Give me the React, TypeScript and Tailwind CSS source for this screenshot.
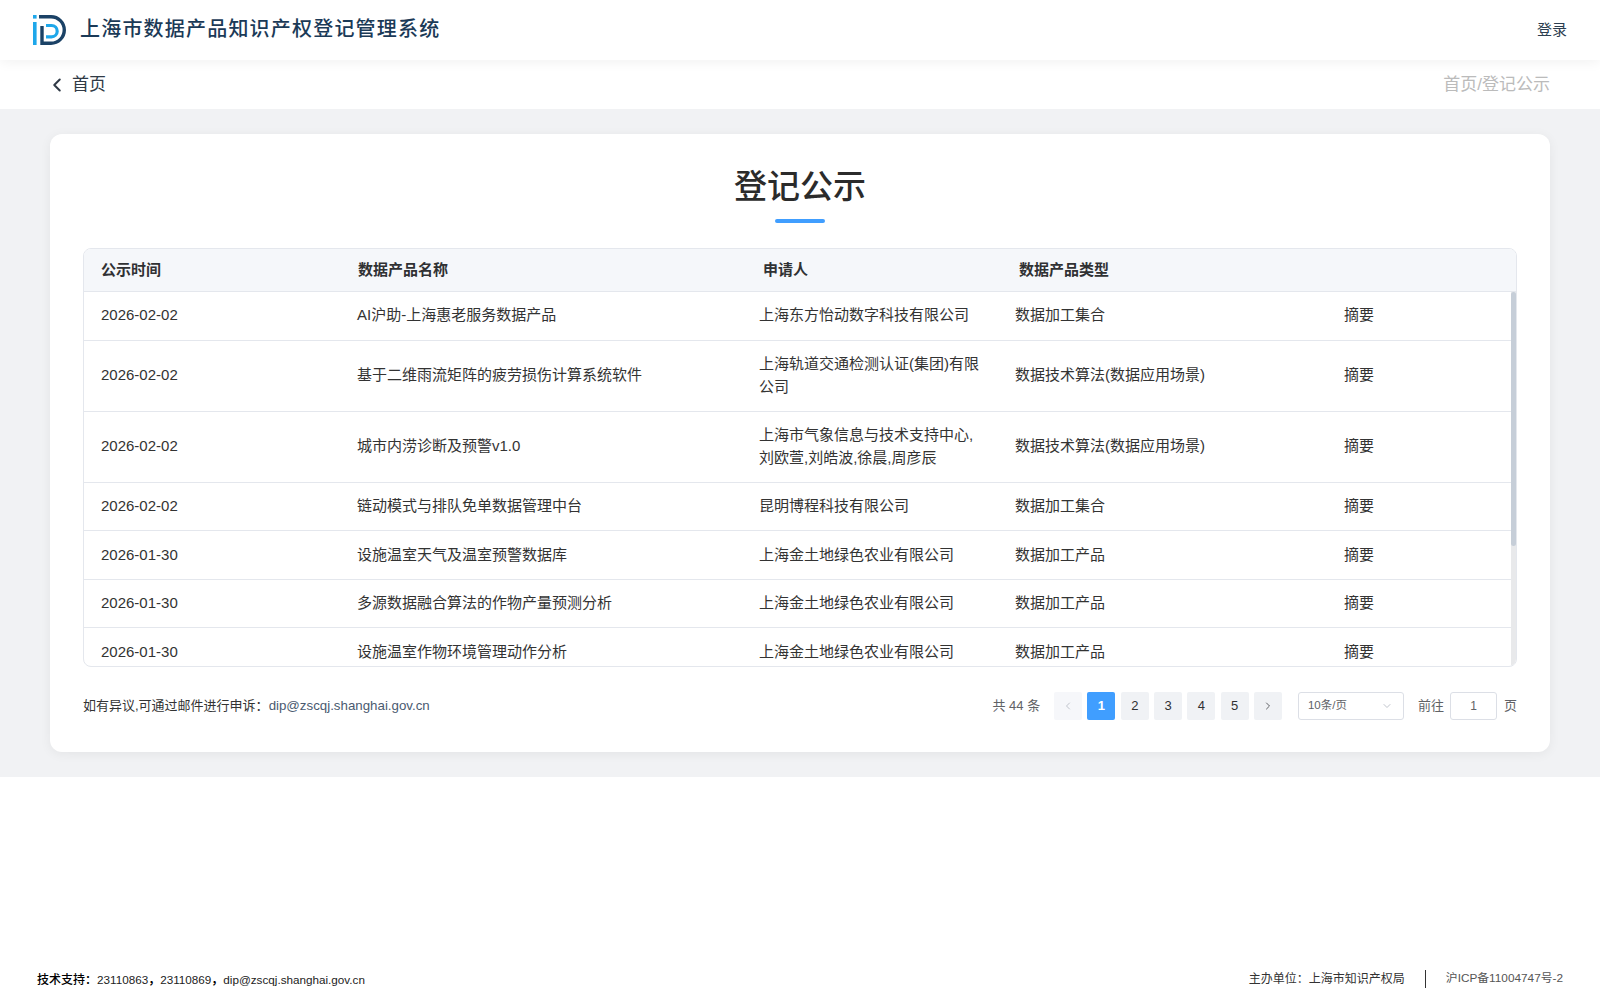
import React from "react";
import { ChevronLeft, ChevronRight, ChevronDown } from "lucide-react";

const bodyCols = "grid grid-cols-[256px_402px_256px_329px_1fr] items-center";
const headCols = "grid grid-cols-[257px_405px_256px_1fr] items-center";

const rows = [
  { date: "2026-02-02", name: "AI沪助-上海惠老服务数据产品", owner: "上海东方怡动数字科技有限公司", type: "数据加工集合", h: "h-[49px] pb-[3px]" },
  { date: "2026-02-02", name: "基于二维雨流矩阵的疲劳损伤计算系统软件", owner: "上海轨道交通检测认证(集团)有限公司", type: "数据技术算法(数据应用场景)", h: "h-[71px] pb-[3px]" },
  { date: "2026-02-02", name: "城市内涝诊断及预警v1.0", owner: "上海市气象信息与技术支持中心,刘欧萱,刘皓波,徐晨,周彦辰", type: "数据技术算法(数据应用场景)", h: "h-[71px] pb-[3px]" },
  { date: "2026-02-02", name: "链动模式与排队免单数据管理中台", owner: "昆明博程科技有限公司", type: "数据加工集合", h: "h-[48px] pb-[2px]" },
  { date: "2026-01-30", name: "设施温室天气及温室预警数据库", owner: "上海金土地绿色农业有限公司", type: "数据加工产品", h: "h-[49px] pb-[2px]" },
  { date: "2026-01-30", name: "多源数据融合算法的作物产量预测分析", owner: "上海金土地绿色农业有限公司", type: "数据加工产品", h: "h-[48px] pb-[2px]" },
  { date: "2026-01-30", name: "设施温室作物环境管理动作分析", owner: "上海金土地绿色农业有限公司", type: "数据加工产品", h: "h-[48px] pb-[1px]" },
];

function Logo() {
  return (
    <svg width="34" height="30" viewBox="0 0 34 30" fill="none" className="shrink-0">
      <rect x="0" y="0" width="3.6" height="3.6" fill="#1ea7ea" />
      <rect x="0" y="7" width="3.6" height="23" fill="#1ea7ea" />
      <path d="M6 1.7H18A13.3 13.3 0 0 1 18 28.3H9V11" stroke="#1b4266" strokeWidth="3.4" />
      <path d="M13 10.5H18.5A5.7 5.7 0 0 1 18.5 21.9H13" stroke="#1ea7ea" strokeWidth="3.2" />
    </svg>
  );
}

function PageButton({ children, active, dim }: { children: React.ReactNode; active?: boolean; dim?: boolean }) {
  return (
    <div
      className={
        "flex h-[28px] w-[28px] items-center justify-center rounded-[2px] text-[13px] " +
        (active ? "bg-[#409eff] font-bold text-white" : dim ? "bg-[#f6f7fa] text-[#c0c4cc]" : "bg-[#f0f2f5] text-[#303133]")
      }
    >
      {children}
    </div>
  );
}

export default function App() {
  return (
    <div className="flex h-screen flex-col overflow-hidden bg-white font-['Liberation_Sans','Noto_Sans_CJK_SC',sans-serif] text-[#303133]">
      <header className="relative z-10 flex h-[60px] shrink-0 items-center justify-between bg-white pl-[33px] pr-[33px] shadow-[0_2px_12px_rgba(0,0,0,0.06)]">
        <div className="flex items-center gap-[13px]">
          <Logo />
          <div className="pb-[2px] text-[20px] font-medium tracking-[1.2px] text-[#1b3a57]">上海市数据产品知识产权登记管理系统</div>
        </div>
        <div className="text-[15px] text-[#2c3e50]">登录</div>
      </header>

      <div className="flex h-[49px] shrink-0 items-center justify-between bg-white pl-[46px] pr-[50px]">
        <div className="flex items-center gap-[4px] text-[17px] text-[#303a46]">
          <ChevronLeft size={22} strokeWidth={2.2} />
          <span>首页</span>
        </div>
        <div className="text-[17px] text-[#bbbbbb]">首页/登记公示</div>
      </div>

      <main className="h-[668px] shrink-0 bg-[#f1f2f4] px-[50px] pt-[25px]">
        <div className="flex h-[618px] flex-col rounded-[12px] bg-white px-[33px] shadow-[0_2px_12px_rgba(0,0,0,0.06)]">
          <h1 className="mt-[30px] text-center text-[33px] font-medium leading-[46px] text-[#2b2b2b]">登记公示</h1>
          <div className="mx-auto mt-[9px] h-[4px] w-[50px] rounded-full bg-[#409eff]" />

          <div className="mt-[25px] h-[419px] overflow-hidden rounded-[8px] border border-[#e4e7ed]">
            <div className={headCols + " h-[43px] border-b border-[#e4e7ed] bg-[#f5f7fa] pl-[17px] text-[15px] font-bold"}>
              <div>公示时间</div>
              <div>数据产品名称</div>
              <div>申请人</div>
              <div>数据产品类型</div>
            </div>
            <div className="relative h-[375px] overflow-hidden">
              {rows.map((r, i) => (
                <div key={i} className={bodyCols + " " + r.h + " border-b border-[#e4e7ed] pl-[17px] text-[15px] leading-[23px] text-[#333333]"}>
                  <div>{r.date}</div>
                  <div>{r.name}</div>
                  <div className="pr-[32px]">{r.owner}</div>
                  <div>{r.type}</div>
                  <div>摘要</div>
                </div>
              ))}
              <div className="absolute bottom-0 right-0 top-0 w-[5px] bg-[#e8e9eb]">
                <div className="h-[254px] rounded-[3px] bg-[#c6ced8]" />
              </div>
            </div>
          </div>

          <div className="mt-[25px] flex h-[28px] items-center justify-between text-[13px]">
            <div>
              <span className="text-[#333333]">如有异议,可通过邮件进行申诉：</span>
              <span className="text-[13.3px] text-[#4a5a70]">dip@zscqj.shanghai.gov.cn</span>
            </div>
            <div className="flex items-center text-[#606266]">
              <span className="mr-[14px]">共 44 条</span>
              <div className="flex gap-[5.3px]">
                <PageButton dim>
                  <ChevronLeft size={12} />
                </PageButton>
                <PageButton active>1</PageButton>
                <PageButton>2</PageButton>
                <PageButton>3</PageButton>
                <PageButton>4</PageButton>
                <PageButton>5</PageButton>
                <PageButton>
                  <ChevronRight size={12} className="text-[#606266]" />
                </PageButton>
              </div>
              <div className="ml-[16px] flex h-[28px] w-[106px] items-center justify-between rounded-[3px] border border-[#dcdfe6] pl-[9px] pr-[10px] text-[11.5px]">
                <span>10条/页</span>
                <ChevronDown size={12} className="text-[#c0c4cc]" />
              </div>
              <span className="ml-[14px]">前往</span>
              <div className="ml-[6px] flex h-[28px] w-[47px] items-center justify-center rounded-[3px] border border-[#dcdfe6] text-[12px]">1</div>
              <span className="ml-[7px]">页</span>
            </div>
          </div>
        </div>
      </main>

      <footer className="mt-auto flex h-[44px] items-center justify-between pl-[37px] pr-[37px] pt-[1px] text-[12px]">
        <div className="flex items-center pt-[2px] text-[11.7px] text-[#222222]">
          <span className="text-[12px] font-medium text-black">技术支持：</span>
          <span>23110863</span>
          <span className="w-[12px] font-bold text-black">，</span>
          <span>23110869</span>
          <span className="w-[12px] font-bold text-black">，</span>
          <span>dip@zscqj.shanghai.gov.cn</span>
        </div>
        <div className="flex items-center text-[#333333]">
          <span>主办单位：上海市知识产权局</span>
          <div className="mx-[20px] h-[18px] w-px bg-[#333333]" />
          <span className="text-[11.8px] text-[#555555]">沪ICP备11004747号-2</span>
        </div>
      </footer>
    </div>
  );
}
